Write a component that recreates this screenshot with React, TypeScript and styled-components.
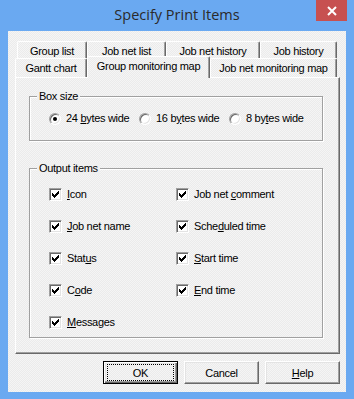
import styled, { createGlobalStyle } from "styled-components";

const GlobalStyle = createGlobalStyle`
  html, body {
    margin: 0;
    padding: 0;
  }
  body {
    width: 354px;
    height: 399px;
    overflow: hidden;
    font-family: "Liberation Sans", Arial, sans-serif;
  }
  * {
    box-sizing: border-box;
  }
`;

const dither = `repeating-conic-gradient(#f5f5f5 0 25%, #ebebeb 0 50%) 0 0 / 2px 2px`;

const Window = styled.div`
  width: 354px;
  height: 399px;
  background: #6aa9f1;
  display: flex;
  flex-direction: column;
`;

const TitleBar = styled.div`
  height: 31px;
  display: grid;
  grid-template-columns: 1fr auto 1fr;
  align-items: start;
`;

const Title = styled.div`
  grid-column: 2;
  font-family: "Open Sans", "Noto Sans", sans-serif;
  font-size: 14.5px;
  line-height: 30px;
  color: #2a2a2a;
  white-space: nowrap;
`;

const CloseButton = styled.div`
  grid-column: 3;
  justify-self: end;
  width: 31px;
  height: 21px;
  margin-right: 7px;
  background: #c75050;
  display: flex;
  align-items: center;
  justify-content: center;
`;

const Client = styled.div`
  flex: 1;
  margin: 0 8px 7px 8px;
  background: ${dither};
  padding: 10px 6px 0 7px;
  display: flex;
  flex-direction: column;
  font-size: 11px;
  letter-spacing: -0.3px;
  color: #000;
`;

const TabRow = styled.div<{ $indent: number; $h: number }>`
  display: flex;
  align-items: flex-end;
  height: ${(p) => p.$h}px;
  margin-left: ${(p) => p.$indent}px;
`;

const Tab = styled.div<{ $w: number; $active?: boolean }>`
  width: ${(p) => p.$w}px;
  height: ${(p) => (p.$active ? "22px" : "100%")};
  border-top: 1px solid #fff;
  border-left: 1px solid #fff;
  border-right: 1px solid #696969;
  box-shadow: inset -1px 0 #a0a0a0;
  border-radius: 2px 2px 0 0;
  text-align: center;
  white-space: nowrap;
  line-height: ${(p) => (p.$active ? 15 : 16)}px;
  padding-top: ${(p) => (p.$active ? 2 : 1)}px;
  background: ${dither};
  position: ${(p) => (p.$active ? "relative" : "static")};
  z-index: ${(p) => (p.$active ? 1 : 0)};
  margin-bottom: ${(p) => (p.$active ? -1 : 0)}px;
`;

const Panel = styled.div`
  width: 325px;
  height: 277px;
  border-top: 1px solid #fff;
  border-left: 1px solid #fff;
  border-right: 1px solid #696969;
  border-bottom: 1px solid #696969;
  box-shadow: inset -1px -1px #a0a0a0;
  padding: 12px 16px 0 13px;
  display: flex;
  flex-direction: column;
  gap: 21px;
`;

const Group = styled.fieldset`
  margin: 0;
  padding: 0;
  min-width: 0;
  border: 1px solid #a0a0a0;
  box-shadow: 1px 1px 0 #fff, inset 1px 1px 0 #fff;
`;

const Legend = styled.legend`
  margin-left: 7px;
  padding: 0 2px;
  line-height: 13px;
  font-size: 11px;
  background: #f0f0f0;
`;

const RadioRow = styled.div`
  display: flex;
  padding: 9px 0 15px 19px;
`;

const Option = styled.label<{ $w: number }>`
  width: ${(p) => p.$w}px;
  height: 13px;
  display: flex;
  align-items: center;
  gap: 5px;
  line-height: 13px;
  white-space: nowrap;
`;

const RadioDot = styled.span<{ $on?: boolean }>`
  width: 12px;
  height: 12px;
  border-radius: 50%;
  border: 1px solid;
  border-color: #a0a0a0 #fff #fff #a0a0a0;
  box-shadow: inset 1px 1px #696969, inset -1px -1px #e3e3e3;
  background: #fff;
  display: flex;
  align-items: center;
  justify-content: center;
  flex: none;
  &::after {
    content: "";
    width: 4px;
    height: 4px;
    border-radius: 50%;
    background: ${(p) => (p.$on ? "#000" : "transparent")};
  }
`;

const CheckGrid = styled.div`
  display: grid;
  grid-template-columns: 127px 127px;
  row-gap: 19px;
  padding: 13px 0 8px 19px;
`;

const CheckBox = styled.span`
  width: 13px;
  height: 13px;
  border: 1px solid;
  border-color: #a0a0a0 #fff #fff #a0a0a0;
  box-shadow: inset 1px 1px #696969, inset -1px -1px #e3e3e3;
  background: #fff;
  display: flex;
  align-items: center;
  justify-content: center;
  flex: none;
`;

const ButtonRow = styled.div`
  display: flex;
  justify-content: flex-end;
  gap: 6px;
  margin-top: 7px;
`;

const Button = styled.div<{ $default?: boolean }>`
  width: 75px;
  height: 23px;
  font-size: 11px;
  display: flex;
  align-items: center;
  justify-content: center;
  border: 1px solid;
  border-color: ${(p) => (p.$default ? "#000" : "#fff #696969 #696969 #fff")};
  box-shadow: ${(p) =>
    p.$default
      ? "inset 1px 1px #fff, inset -1px -1px #696969, inset -2px -2px #a0a0a0, inset 2px 2px #e3e3e3"
      : "inset -1px -1px #a0a0a0, inset 1px 1px #e3e3e3"};
  padding: ${(p) => (p.$default ? "2px 3px" : "0")};
`;

const Focus = styled.span`
  flex: 1;
  align-self: stretch;
  border: 1px dotted #000;
  display: flex;
  align-items: center;
  justify-content: center;
`;

const Check = () => (
  <svg width="7" height="7" viewBox="0 0 7 7" shapeRendering="crispEdges">
    <path
      d="M6 0h1v3h-1v1h-1v1h-1v1h-1v1h-1v-1h-1v-1h-1v-3h1v1h1v1h1v-1h1v-1h1z"
      fill="#000"
    />
  </svg>
);

const label = (text: string, idx: number) => (
  <span>
    {text.slice(0, idx)}
    <u>{text[idx]}</u>
    {text.slice(idx + 1)}
  </span>
);

const items: [string, number][] = [
  ["Icon", 0],
  ["Job net comment", 8],
  ["Job net name", 0],
  ["Scheduled time", 4],
  ["Status", 4],
  ["Start time", 0],
  ["Code", 1],
  ["End time", 0],
  ["Messages", 0],
];

export default function App() {
  return (
    <>
      <GlobalStyle />
      <Window>
        <TitleBar>
          <Title>Specify Print Items</Title>
          <CloseButton>
            <svg width="10" height="10" viewBox="0 0 10 10">
              <path d="M1 1L9 9M9 1L1 9" stroke="#fff" strokeWidth="2" />
            </svg>
          </CloseButton>
        </TitleBar>
        <Client>
          <TabRow $indent={2} $h={17}>
            <Tab $w={70}>Group list</Tab>
            <Tab $w={79}>Job net list</Tab>
            <Tab $w={94}>Job net history</Tab>
            <Tab $w={77}>Job history</Tab>
          </TabRow>
          <TabRow $indent={0} $h={19}>
            <Tab $w={72}>Gantt chart</Tab>
            <Tab $w={123} $active>
              Group monitoring map
            </Tab>
            <Tab $w={127}>Job net monitoring map</Tab>
          </TabRow>
          <Panel>
            <Group>
              <Legend>Box size</Legend>
              <RadioRow>
                <Option $w={90}>
                  <RadioDot $on />
                  {label("24 bytes wide", 3)}
                </Option>
                <Option $w={90}>
                  <RadioDot />
                  {label("16 bytes wide", 4)}
                </Option>
                <Option $w={90}>
                  <RadioDot />
                  {label("8 bytes wide", 4)}
                </Option>
              </RadioRow>
            </Group>
            <Group>
              <Legend>Output items</Legend>
              <CheckGrid>
                {items.map(([t, i]) => (
                  <Option key={t} $w={127}>
                    <CheckBox>
                      <Check />
                    </CheckBox>
                    {label(t, i)}
                  </Option>
                ))}
              </CheckGrid>
            </Group>
          </Panel>
          <ButtonRow>
            <Button $default>
              <Focus>OK</Focus>
            </Button>
            <Button>Cancel</Button>
            <Button>{label("Help", 0)}</Button>
          </ButtonRow>
        </Client>
      </Window>
    </>
  );
}
